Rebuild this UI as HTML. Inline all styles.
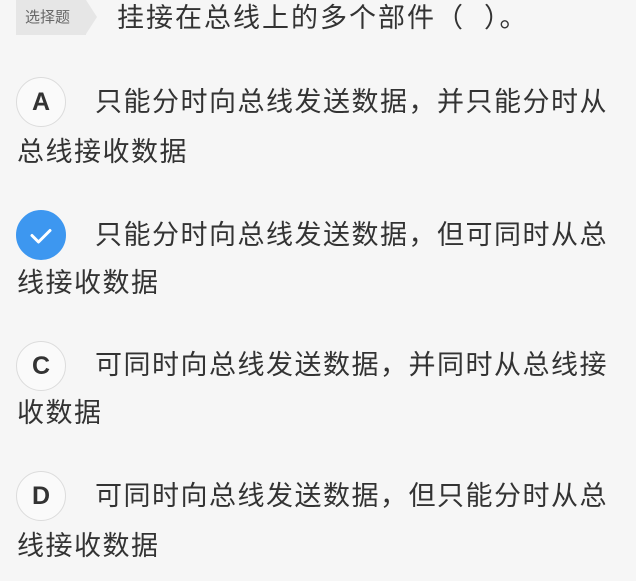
<!DOCTYPE html>
<html><head><meta charset="utf-8"><style>
body{margin:0;width:636px;height:581px;background:#f6f6f6;overflow:hidden;position:relative;font-family:"Liberation Sans","Noto Sans CJK SC",sans-serif;color:#333}
.l{position:absolute;font-size:27px;line-height:40px;letter-spacing:1.5px;white-space:nowrap}
.c{position:absolute;left:16px;width:48px;height:48px;border:1px solid #dcdcdc;border-radius:50%;background:#fafafa;text-align:center;line-height:48px;font-size:25px;font-weight:bold;color:#333}
.tag{position:absolute;left:16px;top:0;width:70px;height:35px;background:#e6e6e6;font-size:15px;color:#666;line-height:35px;padding-left:9px;box-sizing:border-box}
.tag:after{content:"";position:absolute;right:-11px;top:0;border-left:11px solid #e6e6e6;border-top:17.5px solid transparent;border-bottom:17.5px solid transparent}
</style></head><body>
<div class="tag">选择题</div>
<div class="l" style="left:117px;top:-2px;letter-spacing:2px">挂接在总线上的多个部件（&nbsp;&nbsp;）。</div>

<div class="c" style="top:77px">A</div>
<div class="l" style="left:95px;top:82px">只能分时向总线发送数据，并只能分时从</div>
<div class="l" style="left:17px;top:132px">总线接收数据</div>

<div class="c" style="top:210px;background:#3d97f0;border-color:#3d97f0"><svg width="48" height="48" viewBox="0 0 48 48"><path d="M15 24.5l6.5 6.5L33 19.5" fill="none" stroke="#fff" stroke-width="3" stroke-linecap="round" stroke-linejoin="round"/></svg></div>
<div class="l" style="left:95px;top:215px">只能分时向总线发送数据，但可同时从总</div>
<div class="l" style="left:17px;top:263px">线接收数据</div>

<div class="c" style="top:341px">C</div>
<div class="l" style="left:95px;top:345px">可同时向总线发送数据，并同时从总线接</div>
<div class="l" style="left:17px;top:393px">收数据</div>

<div class="c" style="top:471px">D</div>
<div class="l" style="left:95px;top:476px">可同时向总线发送数据，但只能分时从总</div>
<div class="l" style="left:17px;top:526px">线接收数据</div>
</body></html>
